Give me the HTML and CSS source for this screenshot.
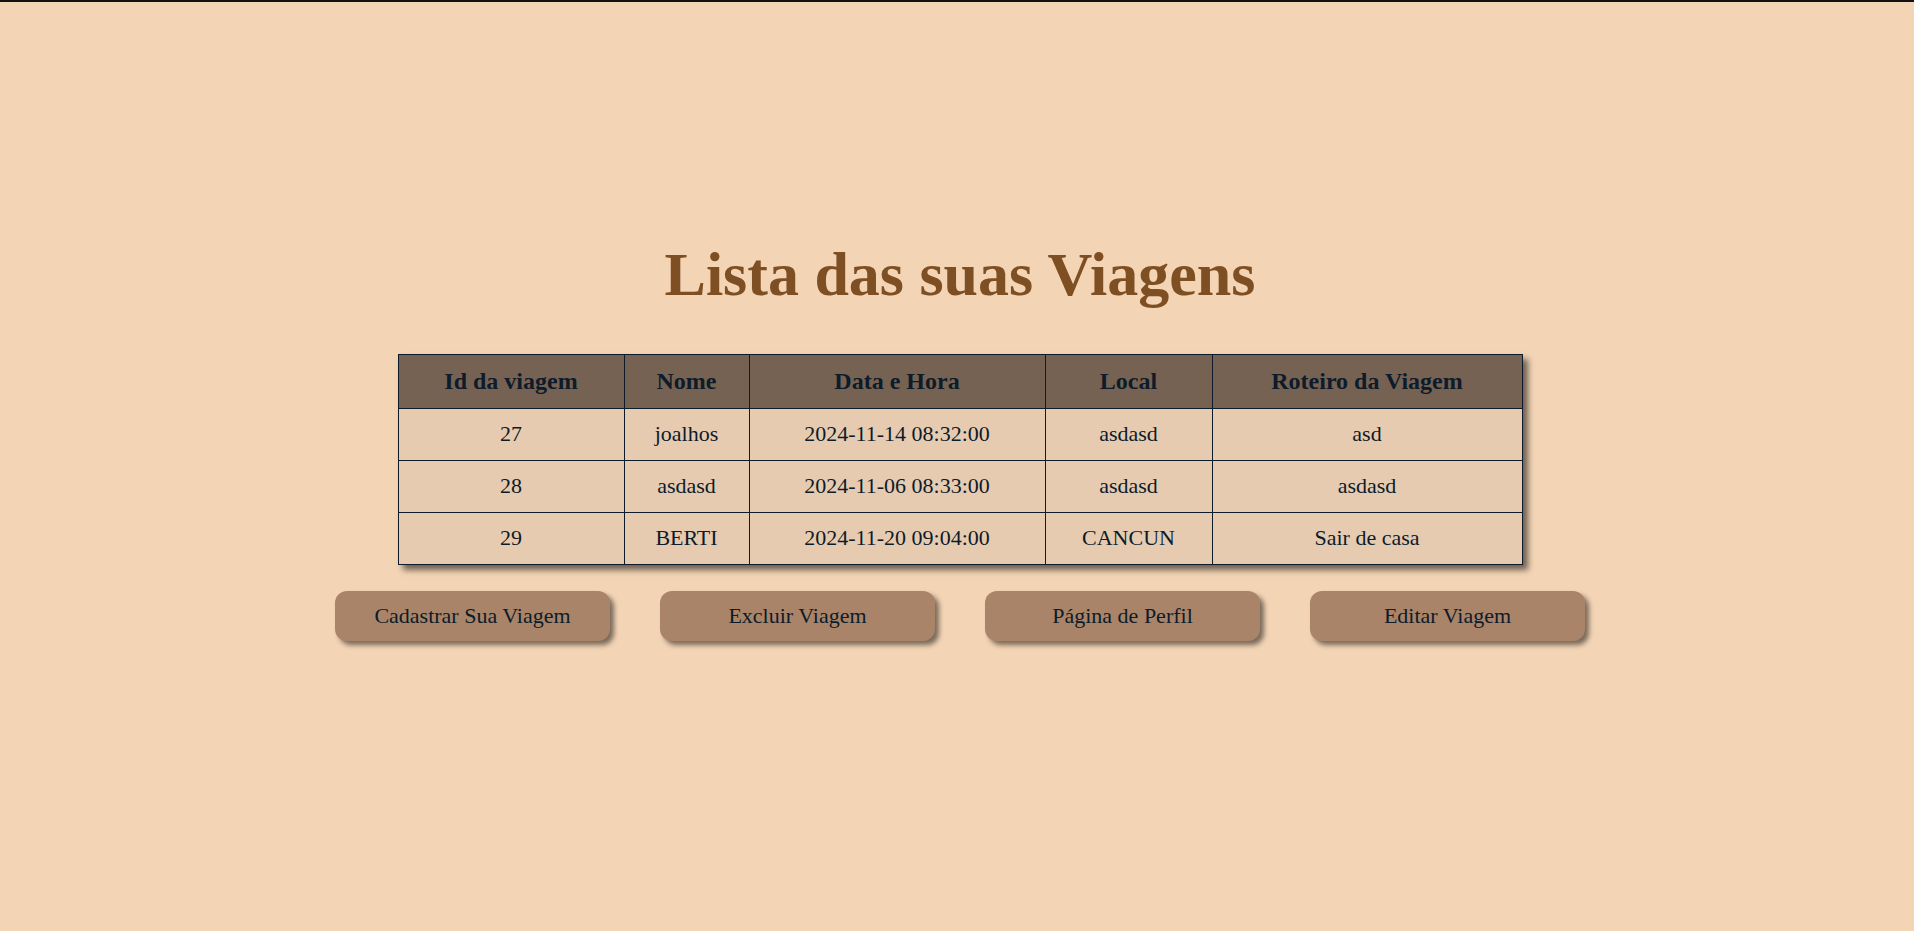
FILE: index.html
```html
<!DOCTYPE html>
<html lang="pt-BR">
<head>
<meta charset="utf-8">
<title>Lista das suas Viagens</title>
<link rel="stylesheet" href="styles.css">
</head>
<body>
<div class="topbar"></div>
<main class="page">
  <h1 class="title">Lista das suas Viagens</h1>
  <table class="trips">
    <colgroup>
      <col class="c-id"><col class="c-nome"><col class="c-data"><col class="c-local"><col class="c-rot">
    </colgroup>
    <thead>
      <tr><th>Id da viagem</th><th>Nome</th><th>Data e Hora</th><th>Local</th><th>Roteiro da Viagem</th></tr>
    </thead>
    <tbody>
      <tr><td>27</td><td>joalhos</td><td>2024-11-14 08:32:00</td><td>asdasd</td><td>asd</td></tr>
      <tr><td>28</td><td>asdasd</td><td>2024-11-06 08:33:00</td><td>asdasd</td><td>asdasd</td></tr>
      <tr><td>29</td><td>BERTI</td><td>2024-11-20 09:04:00</td><td>CANCUN</td><td>Sair de casa</td></tr>
    </tbody>
  </table>
  <div class="actions">
    <button class="btn">Cadastrar Sua Viagem</button>
    <button class="btn">Excluir Viagem</button>
    <button class="btn">Página de Perfil</button>
    <button class="btn">Editar Viagem</button>
  </div>
</main>
</body>
</html>
```
FILE: styles.css
```css
html, body {
  margin: 0;
  padding: 0;
}
body {
  background: #f3d4b5;
  font-family: "Liberation Serif", "Times New Roman", serif;
  color: #0d1b2a;
  min-height: 931px;
}
.topbar {
  height: 2px;
  background: #111111;
}
.page {
  display: flex;
  flex-direction: column;
  align-items: center;
  padding-top: 237px;
  padding-left: 6px;
}
.title {
  margin: 0 0 44px 0;
  font-size: 62px;
  font-weight: bold;
  color: #7f4f24;
  line-height: 1.15;
}
.trips {
  border-collapse: collapse;
  table-layout: fixed;
  width: 1124px;
  box-shadow: 5px 5px 6px rgba(0, 0, 0, 0.55);
}
.c-id { width: 226px; }
.c-nome { width: 125px; }
.c-data { width: 296px; }
.c-local { width: 167px; }
.c-rot { width: 310px; }
.trips th,
.trips td {
  border: 1px solid #0d1b2a;
  text-align: center;
  color: #0d1b2a;
}
.trips th {
  background: #766252;
  font-size: 24px;
  font-weight: bold;
  padding: 13px 8px;
}
.trips td {
  background: #e6cbb1;
  font-size: 22px;
  padding: 12px 8px 13px;
}
.actions {
  display: flex;
  gap: 50px;
  margin-top: 26px;
}
.btn {
  width: 275px;
  height: 50px;
  border: none;
  border-radius: 12px;
  background: #a98468;
  color: #0d1b2a;
  font-family: "Liberation Serif", "Times New Roman", serif;
  font-size: 22px;
  box-shadow: 4px 4px 5px rgba(0, 0, 0, 0.5);
  cursor: pointer;
}
```
